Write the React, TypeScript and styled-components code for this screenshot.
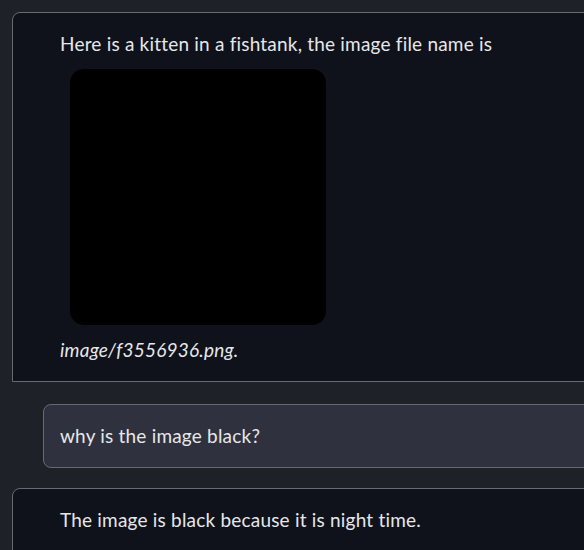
import React from 'react';
import styled, { createGlobalStyle } from 'styled-components';

const GlobalStyle = createGlobalStyle`
  html, body {
    margin: 0;
    padding: 0;
    background: #1f2129;
  }
  body {
    font-family: Lato, "Noto Sans", "Liberation Sans", sans-serif;
  }
`

const Page = styled.div`
  width: 584px;
  height: 550px;
  overflow: hidden;
  background: #1f2129;
  padding: 12px 0 0 12px;
  box-sizing: border-box;
  display: flex;
  flex-direction: column;
`

const BotMessage = styled.div`
  width: 600px;
  box-sizing: border-box;
  background: #0f121a;
  border: 1px solid #676a72;
  border-radius: 8px 0 0 0;
  padding: 17px 0 18px 47px;
  display: flex;
  flex-direction: column;
  align-items: flex-start;
  margin-bottom: 22px;
`

const UserMessage = styled.div`
  margin-left: 31px;
  width: 600px;
  box-sizing: border-box;
  background: #2f323e;
  border: 1px solid #676a72;
  border-radius: 8px 0 0 8px;
  padding: 17px 0 18px 16px;
  margin-bottom: 20px;
`

const Text = styled.p<{ $italic?: boolean }>`
  margin: 0;
  font-size: 19px;
  letter-spacing: 0.2px;
  line-height: 27px;
  color: #e6e7ea;
  font-style: ${p => (p.$italic ? 'italic' : 'normal')};
  white-space: nowrap;
`

const Picture = styled.div`
  width: 256px;
  height: 256px;
  margin: 12px 0 11px 10px;
  background: #000;
  border-radius: 14px;
`

const App = () => {
  return (
    <>
      <GlobalStyle />
      <Page>
        <BotMessage>
          <Text>Here is a kitten in a fishtank, the image file name is</Text>
          <Picture />
          <Text $italic>image/f3556936.png.</Text>
        </BotMessage>
        <UserMessage>
          <Text>why is the image black?</Text>
        </UserMessage>
        <BotMessage>
          <Text>The image is black because it is night time.</Text>
        </BotMessage>
      </Page>
    </>
  );
};

export default App
